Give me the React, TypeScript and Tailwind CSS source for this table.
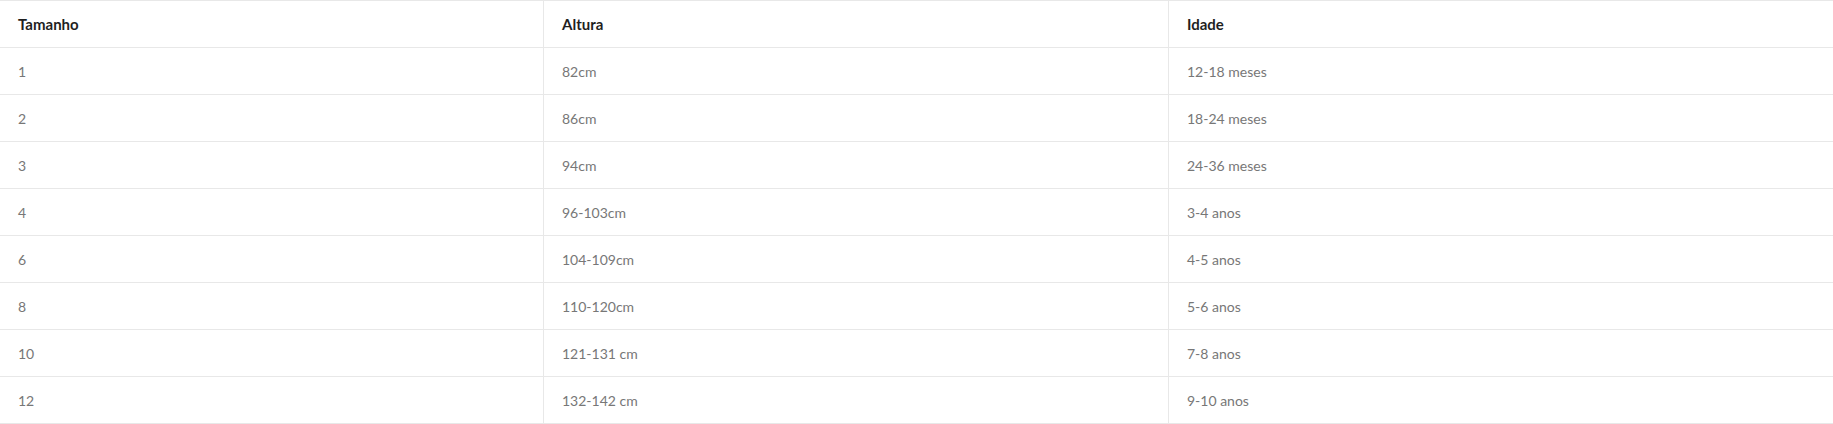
const rows = [
  ["1", "82cm", "12-18 meses"],
  ["2", "86cm", "18-24 meses"],
  ["3", "94cm", "24-36 meses"],
  ["4", "96-103cm", "3-4 anos"],
  ["6", "104-109cm", "4-5 anos"],
  ["8", "110-120cm", "5-6 anos"],
  ["10", "121-131 cm", "7-8 anos"],
  ["12", "132-142 cm", "9-10 anos"],
];

const cell = "h-[46px] flex items-center px-[18px]";

export default function App() {
  return (
    <div className="w-[1833px] bg-white font-['Lato',sans-serif] border-t border-[#e8e8e8]">
      <div className="grid grid-cols-[544px_625px_1fr] border-b border-[#e8e8e8] text-[15px] font-bold text-[#1f1f1f]">
        <div className={`${cell} border-r border-[#e8e8e8]`}>Tamanho</div>
        <div className={`${cell} border-r border-[#e8e8e8]`}>Altura</div>
        <div className={cell}>Idade</div>
      </div>
      {rows.map(([size, height, age]) => (
        <div
          key={size}
          className="grid grid-cols-[544px_625px_1fr] border-b border-[#e8e8e8] text-[14px] text-[#777777]"
        >
          <div className={`${cell} border-r border-[#e8e8e8]`}>{size}</div>
          <div className={`${cell} border-r border-[#e8e8e8]`}>{height}</div>
          <div className={cell}>{age}</div>
        </div>
      ))}
    </div>
  );
}
